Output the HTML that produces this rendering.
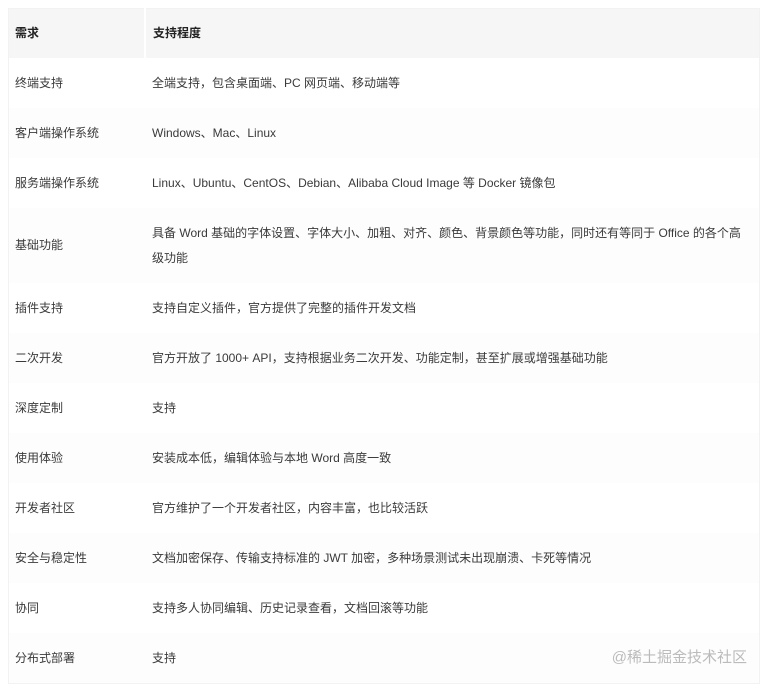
<!DOCTYPE html>
<html><head><meta charset="utf-8"><style>
body{margin:0;background:#fff;font-family:"Liberation Sans","Noto Sans CJK SC",sans-serif;font-size:12px;color:#3a3a3a;width:767px;height:687px;overflow:hidden;position:relative}
table{position:absolute;left:8px;top:8px;width:752px;border-collapse:collapse;border:1px solid #f2f2f2}
td,th{text-align:left;padding:0 7px;height:50px;vertical-align:middle;line-height:25px}
td:first-child,th:first-child{padding-left:6px}
th{background:#f6f6f6;font-weight:bold;height:49px;color:#222}
th:first-child{border-right:2px solid #fff}
td:first-child,th:first-child{width:122px}
tr:nth-child(odd) td{background:#fdfdfd}
.tall td{height:75px}
.wm{position:absolute;right:20px;top:646px;font-size:15px;color:#bbb}
</style></head><body>
<table>
<tr><th>需求</th><th>支持程度</th></tr>
<tr><td>终端支持</td><td>全端支持，包含桌面端、PC 网页端、移动端等</td></tr>
<tr><td>客户端操作系统</td><td>Windows、Mac、Linux</td></tr>
<tr><td>服务端操作系统</td><td>Linux、Ubuntu、CentOS、Debian、Alibaba Cloud Image 等 Docker 镜像包</td></tr>
<tr class="tall"><td>基础功能</td><td>具备 Word 基础的字体设置、字体大小、加粗、对齐、颜色、背景颜色等功能，同时还有等同于 Office 的各个高级功能</td></tr>
<tr><td>插件支持</td><td>支持自定义插件，官方提供了完整的插件开发文档</td></tr>
<tr><td>二次开发</td><td>官方开放了 1000+ API，支持根据业务二次开发、功能定制，甚至扩展或增强基础功能</td></tr>
<tr><td>深度定制</td><td>支持</td></tr>
<tr><td>使用体验</td><td>安装成本低，编辑体验与本地 Word 高度一致</td></tr>
<tr><td>开发者社区</td><td>官方维护了一个开发者社区，内容丰富，也比较活跃</td></tr>
<tr><td>安全与稳定性</td><td>文档加密保存、传输支持标准的 JWT 加密，多种场景测试未出现崩溃、卡死等情况</td></tr>
<tr><td>协同</td><td>支持多人协同编辑、历史记录查看，文档回滚等功能</td></tr>
<tr><td>分布式部署</td><td>支持</td></tr>
</table>
<div class="wm">@稀土掘金技术社区</div>
</body></html>
